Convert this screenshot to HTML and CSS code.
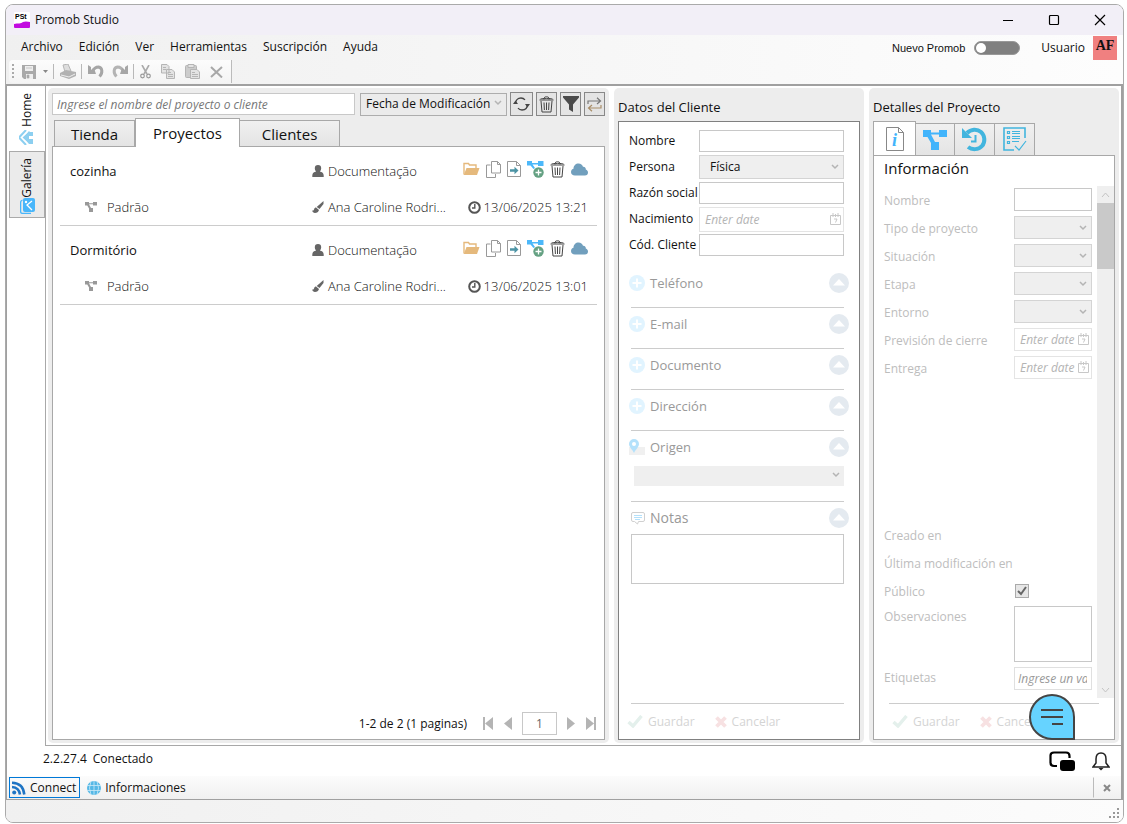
FILE: index.html
```html
<!DOCTYPE html>
<html lang="es">
<head>
	<meta charset="UTF-8">
	<title>Promob Studio</title>
	<link rel="stylesheet" href="styles.css">
</head>
<body>
<!-- icons -->
<svg class="defs" aria-hidden="true">
	<symbol id="i-user" viewBox="0 0 12 13"><path fill="#666" d="M6 0a3.200 3.200 0 0 1 3.200 3.200c0 1.600-.7 2.600-1.400 3.300 2.400.4 3.900 1.500 3.900 4V12H.3v-1.500c0-2.500 1.500-3.600 3.900-4-.7-.7-1.400-1.700-1.400-3.300A3.200 3.200 0 0 1 6 0z"/></symbol>
	<symbol id="i-brush" viewBox="0 0 12 12"><path fill="#666" d="M11.500 0v3L7.500 8 4.700 6z"/><path fill="#666" d="M4 6.500 7 9c-.5 2-2 3-4 3C1.500 12 .5 11 0 9.500c1.500.5 2-.5 2.200-1.500.3-1 .9-1.500 1.800-1.500z"/></symbol>
	<symbol id="i-clock" viewBox="0 0 13 13"><circle cx="6.500" cy="6.500" r="5.300" fill="none" stroke="#555" stroke-width="2"/><path d="M6.800 3v4H4" fill="none" stroke="#555" stroke-width="1.400"/></symbol>
	<symbol id="i-folder" viewBox="0 0 17 14"><path d="M1 12.500V1.500h4.500l1 1.500H13v3" fill="none" stroke="#e5b97c" stroke-width="1.400"/><path d="M3.500 6H16.500L14 13H.8z" fill="#e5b97c"/></symbol>
	<symbol id="i-pages" viewBox="0 0 15 17"><path d="M5.500.5h6l3 3v8.500h-9zM11.500.5v3h3M4.500 4H.5v12.500h9V13" fill="none" stroke="#999"/></symbol>
	<symbol id="i-export" viewBox="0 0 14 16"><path d="M.5.5h9l4 4v11H.5zM9.500.5v4h4" fill="none" stroke="#999"/><path d="M3 8.200h4.500V5.800L11.500 9.500l-4 3.700v-2.400H3z" fill="#4d94a5"/></symbol>
	<symbol id="i-nodeadd" viewBox="0 0 17 17"><path d="M0 0h5v2h6V0h5.500v5H11V3.500H5.500L8 7 6.500 8 3.500 4.500H0z" fill="#4cb8fa"/><circle cx="11.500" cy="11.500" r="5.200" fill="#65a183"/><path d="M8.500 11.500h6M11.500 8.500v6" stroke="#fff" stroke-width="1.300"/></symbol>
	<symbol id="i-trash" viewBox="0 0 15 17"><path d="M.5 4h14M5 3.500C5 1 6 .8 7.500.8S10 1 10 3.500M1.500 3C3 2.200 12 2.200 13.500 3M2 5l1 11h9l1-11M5 6.500l.4 7.500M7.500 6.500V14M10 6.500 9.600 14" fill="none" stroke="#444"/></symbol>
	<symbol id="i-cloud" viewBox="0 0 17 13"><path d="M4 12.500C1.500 12.500 0 11 0 9s1.300-3 2.500-3.300C2.500 2.500 4.800.5 7.500.5c2.300 0 4 1.300 4.500 3.200 2-.2 3 1.300 2.800 2.800C16.200 7 17 8 17 9.500c0 1.800-1.200 3-3 3z" fill="#719fbd"/></symbol>
	<symbol id="i-node" viewBox="0 0 24 20"><path d="M0 0h8v2.500h8V0h8v7h-8V4.500H8L12 12h4v8H8v-7L4.500 7H0z" fill="currentColor"/></symbol>
	<symbol id="i-up" viewBox="0 0 20 20"><circle cx="10" cy="10" r="10" fill="#e4eaf0"/><path d="M4 12.500 10 6l6 6.500z" fill="#fff"/></symbol>
	<symbol id="i-plus" viewBox="0 0 16 16"><circle cx="8" cy="8" r="8" fill="#e1f4ff"/><path d="M3.500 8h9M8 3.500v9" stroke="#fff" stroke-width="2"/></symbol>
	<symbol id="i-cal" viewBox="0 0 11 12"><path d="M.5 2.500h10v9H.5zM3 0v4M5.500 1v3M8 0v4M4 6h3L5.500 9.500" fill="none" stroke="#c8c8c8"/></symbol>
	<symbol id="i-ok" viewBox="0 0 16 13"><path d="M1.500 7 6 11l8.500-10" fill="none" stroke="#e4f0ec" stroke-width="3.400"/></symbol>
	<symbol id="i-no" viewBox="0 0 12 12"><path d="m1.500 1.500 9 9m0-9-9 9" stroke="#f7e1e2" stroke-width="3.800"/></symbol>
</svg>

<div class="window">
	<header class="titlebar">
		<svg class="logo" width="16" height="16"><rect width="16" height="16" rx="1" fill="#fff"/><text x="1" y="7">PSt</text><path d="M0 12c4-1 7 0 9-2 2-1 5-.5 7 0v5q0 1-1 1H1q-1 0-1-1z" fill="#c20be0"/></svg>
		<h1>Promob Studio</h1>
		<div class="winbtns">
			<button type="button" aria-label="Minimizar"><svg width="12" height="12"><path d="M1 6.500h10" stroke="#000"/></svg></button>
			<button type="button" aria-label="Maximizar"><svg width="12" height="12"><rect x="1.500" y="1.500" width="9" height="9" rx="1" fill="none" stroke="#000" stroke-width="1.200"/></svg></button>
			<button type="button" aria-label="Cerrar"><svg width="12" height="12"><path d="m1 1 10 10m0-10L1 11" stroke="#000" stroke-width="1.200"/></svg></button>
		</div>
	</header>

	<div class="top">
		<div class="top-left">
			<nav class="menu">
				<a href="#">Archivo</a>
				<a href="#">Edición</a>
				<a href="#">Ver</a>
				<a href="#">Herramientas</a>
				<a href="#">Suscripción</a>
				<a href="#">Ayuda</a>
			</nav>
			<div class="toolbar">
				<span class="grip"></span>
				<button type="button" aria-label="Guardar"><svg width="14" height="14"><path d="M0 0h14v14H2l-2-2z" fill="#a9a9a9"/><path d="M3 1h8v5H3zM4 9h7v5H4z" fill="#eee"/><path d="M5 10h2v3H5zM4 3h6" fill="#a9a9a9" stroke="#a9a9a9" stroke-width=".6"/></svg></button>
				<button type="button" class="caret" aria-label="Más"><svg width="5" height="3"><path d="M0 0h5L2.500 3z" fill="#888"/></svg></button>
				<i></i>
				<button type="button" aria-label="Imprimir"><svg width="16" height="15"><path d="M3 1 8 0l3 7-6 1z" fill="#ddd" stroke="#b5b5b5"/><path d="m0 9 6-3 10 2v4l-7 3-9-3z" fill="#b2b2b2"/><path d="m1 11 8 2 6-3" fill="none" stroke="#eee"/></svg></button>
				<i></i>
				<button type="button" aria-label="Deshacer"><svg width="16" height="13"><path d="M4 7C6 3 8 2 10.500 2c4 .5 4.500 6 1 9.500" fill="none" stroke="#a6a6a6" stroke-width="3"/><path d="M0 0 3 2v3l3-2 2 6H0z" fill="#a6a6a6"/></svg></button>
				<button type="button" aria-label="Rehacer"><svg width="16" height="13"><path d="M12 7C10 3 8 2 5.500 2 1.500 2.500 1 8 4.500 11.500" fill="none" stroke="#b4b4b4" stroke-width="3"/><path d="m16 0-3 2v3l-3-2-2 6h8z" fill="#a6a6a6"/></svg></button>
				<i></i>
				<button type="button" aria-label="Cortar"><svg width="11" height="14"><path d="M2 0l5 9M9 0 4 9" stroke="#aaa" stroke-width="1.600"/><circle cx="2.500" cy="11" r="1.800" fill="none" stroke="#999" stroke-width="1.200"/><circle cx="8.500" cy="11" r="1.800" fill="none" stroke="#999" stroke-width="1.200"/></svg></button>
				<button type="button" aria-label="Copiar"><svg width="14" height="15"><path d="M.5.500H6l2 2V9H.5zM5.500 5.500H11l2.500 2.500v6.500h-8z" fill="#e3e3e3" stroke="#b5b5b5"/><path d="M7 8.500h3M7 10.500h5M7 12.500h5M2 3.500h3M2 5.500h3" stroke="#b5b5b5"/></svg></button>
				<button type="button" aria-label="Pegar"><svg width="15" height="15"><rect x=".5" y="1.500" width="11" height="12" rx="1" fill="#ccc" stroke="#b5b5b5"/><path d="M3 .500h6v3H3zM5.500 5.500H12l2.500 2.500v6.500h-9z" fill="#e3e3e3" stroke="#b5b5b5"/><path d="M7 8.500h3M7 10.500h6M7 12.500h6" stroke="#b5b5b5"/></svg></button>
				<button type="button" aria-label="Eliminar"><svg width="13" height="12"><path d="m1 1 11 10.500M12 1 1 11" stroke="#a8a8a8" stroke-width="2"/></svg></button>
			</div>
		</div>
		<div class="account">
			<label for="nuevo">Nuevo Promob</label>
			<input type="checkbox" id="nuevo" class="switch" role="switch">
			<span class="user">Usuario</span>
			<b class="avatar">AF</b>
		</div>
	</div>

	<main class="main">
		<nav class="side">
			<a href="#" class="home"><span>Home</span><svg width="15" height="15"><path d="M7 0 0 7.500 7 15M11 2 5 7.500 11 13" fill="none" stroke="#8ccff0" stroke-width="2"/><path d="M5 7.500 10 1v1h4v4h-4v3h4v5h-4z" fill="#8ccff0"/></svg></a>
			<a href="#" class="gal"><span>Galería</span><svg width="15" height="16"><path d="M2.500 2C1 2.500.6 3 .6 4.500v9c0 1.300.6 1.900 1.900 1.900H11" fill="none" stroke="#49b6fa" stroke-width="1.300"/><rect x="3" width="12" height="14" rx="2" fill="#49b6fa"/><path d="m12 3-5 4 5 5" fill="none" stroke="#fff" stroke-width="1.300"/><circle cx="6" cy="4" r="1.200" fill="#fff"/></svg></a>
		</nav>

		<div class="panels">
			<!-- projects -->
			<section class="panel projects">
				<div class="search">
					<input type="text" placeholder="Ingrese el nombre del proyecto o cliente" aria-label="Buscar">
					<select aria-label="Orden"><option>Fecha de Modificación</option></select>
					<button type="button" aria-label="Actualizar"><svg width="17" height="16"><path d="M2.500 8C2.500 4 5 2 8 2c2 0 3 .6 4 1.800M14.500 8c0 4-2.500 6-5.500 6-2 0-3-.6-4-1.800" fill="none" stroke="#444" stroke-width="1.300"/><path d="M0 8h5L2.500 4.500zM17 8h-5l2.500 3.500z" fill="#444"/></svg></button>
					<button type="button" aria-label="Papelera"><svg width="15" height="17"><use href="#i-trash"/></svg></button>
					<button type="button" aria-label="Filtro"><svg width="16" height="16"><path d="M0 0h16v1.500L10 8.500V16l-4-2.500v-5L0 1.500z" fill="#4a4a4a"/></svg></button>
					<button type="button" aria-label="Intercambiar"><svg width="15" height="15"><path d="M1 7V4h12M10 .800 13.500 4 10 7" fill="none" stroke="#777" stroke-width="1.200"/><path d="M14 8v3H2M5 8l-3.500 3L5 14.200" fill="none" stroke="#a88d68" stroke-width="1.200"/></svg></button>
				</div>
				<div class="tabs">
					<button type="button">Tienda</button>
					<button type="button" class="actived">Proyectos</button>
					<button type="button">Clientes</button>
				</div>
				<div class="box">
					<article class="item">
						<div class="name">cozinha</div>
						<div class="cell"><svg width="12" height="13"><use href="#i-user"/></svg>Documentação</div>
						<div class="acts">
							<svg width="17" height="14"><use href="#i-folder"/></svg>
							<svg width="15" height="17"><use href="#i-pages"/></svg>
							<svg width="14" height="16"><use href="#i-export"/></svg>
							<svg width="17" height="17"><use href="#i-nodeadd"/></svg>
							<svg width="15" height="17"><use href="#i-trash"/></svg>
							<svg width="17" height="13"><use href="#i-cloud"/></svg>
						</div>
						<div class="cell env"><svg width="12" height="10"><use href="#i-node"/></svg>Padrão</div>
						<div class="cell"><svg width="12" height="12"><use href="#i-brush"/></svg>Ana Caroline Rodri...</div>
						<div class="cell date"><svg width="13" height="13"><use href="#i-clock"/></svg>13/06/2025 13:21</div>
					</article>
					<article class="item">
						<div class="name">Dormitório</div>
						<div class="cell"><svg width="12" height="13"><use href="#i-user"/></svg>Documentação</div>
						<div class="acts">
							<svg width="17" height="14"><use href="#i-folder"/></svg>
							<svg width="15" height="17"><use href="#i-pages"/></svg>
							<svg width="14" height="16"><use href="#i-export"/></svg>
							<svg width="17" height="17"><use href="#i-nodeadd"/></svg>
							<svg width="15" height="17"><use href="#i-trash"/></svg>
							<svg width="17" height="13"><use href="#i-cloud"/></svg>
						</div>
						<div class="cell env"><svg width="12" height="10"><use href="#i-node"/></svg>Padrão</div>
						<div class="cell"><svg width="12" height="12"><use href="#i-brush"/></svg>Ana Caroline Rodri...</div>
						<div class="cell date"><svg width="13" height="13"><use href="#i-clock"/></svg>13/06/2025 13:01</div>
					</article>
					<div class="pager">
						<span>1-2 de 2 (1 paginas)</span>
						<button type="button" aria-label="Primera"><svg width="10" height="13"><path d="M0 0h2v13H0zM10 0v13L2 6.500z" fill="#b4b4b4"/></svg></button>
						<button type="button" aria-label="Anterior"><svg width="8" height="13"><path d="M8 0v13L0 6.500z" fill="#b4b4b4"/></svg></button>
						<input type="text" value="1" aria-label="Página">
						<button type="button" aria-label="Siguiente"><svg width="8" height="13"><path d="M0 0v13l8-6.500z" fill="#b4b4b4"/></svg></button>
						<button type="button" aria-label="Última"><svg width="10" height="13"><path d="M8 0h2v13H8zM0 0v13l8-6.500z" fill="#b4b4b4"/></svg></button>
					</div>
				</div>
			</section>

			<!-- client data -->
			<section class="panel client">
				<h2>Datos del Cliente</h2>
				<div class="box">
					<div class="row"><label for="c1">Nombre</label><input type="text" id="c1"></div>
					<div class="row"><label for="c2">Persona</label><select id="c2"><option>Física</option></select></div>
					<div class="row"><label for="c3">Razón social</label><input type="text" id="c3"></div>
					<div class="row"><label for="c4">Nacimiento</label><span class="date-in"><input type="text" id="c4" placeholder="Enter date"><svg width="11" height="12"><use href="#i-cal"/></svg></span></div>
					<div class="row"><label for="c5">Cód. Cliente</label><input type="text" id="c5"></div>
					<div class="groups">
						<div class="group"><h3><svg width="16" height="16"><use href="#i-plus"/></svg>Teléfono<button type="button" aria-label="Plegar"><svg width="20" height="20"><use href="#i-up"/></svg></button></h3></div>
						<div class="group"><h3><svg width="16" height="16"><use href="#i-plus"/></svg>E-mail<button type="button" aria-label="Plegar"><svg width="20" height="20"><use href="#i-up"/></svg></button></h3></div>
						<div class="group"><h3><svg width="16" height="16"><use href="#i-plus"/></svg>Documento<button type="button" aria-label="Plegar"><svg width="20" height="20"><use href="#i-up"/></svg></button></h3></div>
						<div class="group"><h3><svg width="16" height="16"><use href="#i-plus"/></svg>Dirección<button type="button" aria-label="Plegar"><svg width="20" height="20"><use href="#i-up"/></svg></button></h3></div>
						<div class="group origin">
							<h3><svg width="16" height="16"><path d="M0 8h16v8H0z" fill="#f0f0f0"/><path d="M5 0a5 5 0 0 1 5 5c0 3-3 5-5 9C3 10 0 8 0 5a5 5 0 0 1 5-5z" fill="#b4e1fb"/><circle cx="5" cy="5" r="2" fill="#fff"/></svg>Origen<button type="button" aria-label="Plegar"><svg width="20" height="20"><use href="#i-up"/></svg></button></h3>
							<select aria-label="Origen"></select>
						</div>
						<div class="group notes">
							<h3><svg width="16" height="16"><path d="M4 2.500h10q1.500 0 1.500 1.500v6q0 1.500-1.500 1.500H9.500l-1 2.500-3-2.500H4Q2.500 11.500 2.500 10V4q0-1.500 1.500-1.500z" fill="#fff" stroke="#d0d0d0"/><path d="M5 5.500h8M5 7.500h8M6 9.500h5" stroke="#b4e1fb"/></svg><label for="notas">Notas</label><button type="button" aria-label="Plegar"><svg width="20" height="20"><use href="#i-up"/></svg></button></h3>
							<textarea id="notas"></textarea>
						</div>
					</div>
					<div class="foot">
						<button type="button"><svg width="16" height="13"><use href="#i-ok"/></svg>Guardar</button>
						<button type="button"><svg width="12" height="12"><use href="#i-no"/></svg>Cancelar</button>
					</div>
				</div>
			</section>

			<!-- project details -->
			<section class="panel details">
				<h2>Detalles del Proyecto</h2>
				<div class="tabs">
					<button type="button" class="actived" aria-label="Información"><svg width="18" height="24"><path d="M.5.500h12l5 5v18H.5zM12.500.500v5h5" fill="#fff" stroke="#888"/><text class="info" x="6" y="19">i</text></svg></button>
					<button type="button" class="nodes" aria-label="Entornos"><svg width="24" height="20"><use href="#i-node"/></svg></button>
					<button type="button" aria-label="Historial"><svg width="25" height="26"><path d="M5 6C9 2 15 1.500 19 5s4.500 10 1 14-10 4-14 1" fill="none" stroke="#42b5de" stroke-width="4"/><path d="M0 1v10h10z" fill="#42b5de"/><path d="M13.500 8v6.500H9" fill="none" stroke="#42b5de" stroke-width="2"/></svg></button>
					<button type="button" aria-label="Tareas"><svg width="24" height="25"><path d="M22 11V1H1v22h10" fill="none" stroke="#42b5de" stroke-width="1.600"/><path d="M4.500 4.500h2v2h-2zM4.500 9.500h2v2h-2zM4.500 14.500h2v2h-2zM9 4.500h8M9 6.500h8M9 9.500h8M9 11.500h8M9 14.500h7M12 19l4 4 7-9" fill="none" stroke="#42b5de" stroke-width="1.200"/></svg></button>
				</div>
				<div class="box">
					<h3>Información</h3>
					<div class="scroller">
						<div class="form">
							<label for="d1">Nombre</label><input type="text" id="d1">
							<label for="d2">Tipo de proyecto</label><select id="d2"></select>
							<label for="d3">Situación</label><select id="d3"></select>
							<label for="d4">Etapa</label><select id="d4"></select>
							<label for="d5">Entorno</label><select id="d5"></select>
							<label for="d6">Previsión de cierre</label><span class="date-in"><input type="text" id="d6" placeholder="Enter date"><svg width="11" height="12"><use href="#i-cal"/></svg></span>
							<label for="d7">Entrega</label><span class="date-in"><input type="text" id="d7" placeholder="Enter date"><svg width="11" height="12"><use href="#i-cal"/></svg></span>
							<span class="gap"></span>
							<span class="wide">Creado en</span>
							<span class="wide">Última modificación en</span>
							<label for="d8">Público</label><input type="checkbox" id="d8" class="check" checked>
							<label for="d9" class="obs">Observaciones</label><textarea id="d9"></textarea>
							<label for="d10" class="tag">Etiquetas</label><input type="text" id="d10" class="pale" placeholder="Ingrese un valor">
						</div>
						<div class="bar">
							<svg width="9" height="17"><path d="m1 11 3.500-4L8 11" fill="none" stroke="#c4c4c4"/></svg>
							<span class="thumb"></span>
							<svg width="9" height="17"><path d="m1 7 3.500 4L8 7" fill="none" stroke="#c4c4c4"/></svg>
						</div>
					</div>
					<div class="foot">
						<button type="button"><svg width="16" height="13"><use href="#i-ok"/></svg>Guardar</button>
						<button type="button"><svg width="12" height="12"><use href="#i-no"/></svg>Cancelar</button>
					</div>
					<button type="button" class="chat" aria-label="Chat"><svg width="46" height="46"><path d="M23 1a22 22 0 1 0 0 44h22V23A22 22 0 0 0 23 1z" fill="#66d3ff" stroke="#444" stroke-width="2"/><path d="M12 16h22M12 23h22M23 30h11" stroke="#444" stroke-width="2"/></svg></button>
				</div>
			</section>
		</div>
	</main>

	<div class="status">
		<span>2.2.27.4</span><span>Conectado</span>
		<svg class="cards" width="26" height="20"><path d="M8 15H5q-3.500 0-3.500-3.500v-7Q1.500 1.500 5 1.500h12q3.500 0 3.500 3.500v2" fill="none" stroke="#000" stroke-width="2.200"/><rect x="11" y="9" width="15" height="11" rx="3"/></svg>
		<svg width="18" height="19"><path d="M9 1C5.500 1 4 3.500 4 7v4l-3 4h16l-3-4V7c0-3.500-1.500-6-5-6z" fill="none" stroke="#222" stroke-width="1.500"/><path d="M6.500 16h5L9 18.500z" fill="#222"/></svg>
	</div>
	<div class="dock">
		<button type="button" class="actived"><svg width="14" height="14"><circle cx="2.200" cy="11.500" r="2" fill="#1e74c4"/><path d="M0 6q7 .5 8 7.500M0 1.800Q11 2 12.300 13.500" fill="none" stroke="#1e74c4" stroke-width="2.600"/></svg>Connect</button>
		<button type="button"><svg width="14" height="14"><circle cx="7" cy="7" r="7" fill="#55b8e6"/><path d="M0 4.500h14M0 9.500h14M7 0v14M4 0q-3 7 0 14M10 0q3 7 0 14" fill="none" stroke="#cdeaf8" stroke-width=".8"/></svg>Informaciones</button>
		<button type="button" class="close" aria-label="Cerrar panel"><svg width="8" height="8"><path d="m1 1 6 6m0-6L1 7" stroke="#888" stroke-width="2"/></svg></button>
	</div>
	<footer class="bottom"><svg width="11" height="11"><path d="M8 0h2v2H8zM4 4h2v2H4zM8 4h2v2H8zM0 8h2v2H0zM4 8h2v2H4zM8 8h2v2H8z" fill="#999"/></svg></footer>
</div>
</body>
</html>
```
FILE: styles.css
```css
*{box-sizing:border-box;}
body{margin:0;padding:4px 3px 1px 5px;height:100vh;background:#fff;font:12px/16px "Open Sans","Noto Sans",sans-serif;color:#111;}
h1,h2,h3{margin:0;font-weight:normal;}
a{color:inherit;text-decoration:none;}
button,input,select,textarea{font:inherit;color:inherit;border-radius:0;margin:0;min-width:0;}
button{background:none;border:0;padding:0;display:flex;align-items:center;justify-content:center;}
svg{flex:none;display:block;}
.defs{display:none;}
input,textarea{border:1px solid #c8c8c8;background:#fff;padding:0 4px;resize:none;}
input::placeholder{color:#999;font-style:italic;opacity:1;}
select{appearance:none;border:1px solid #d4d4d4;padding:0 16px 0 10px;background:#efefef url("data:image/svg+xml,%3Csvg xmlns='http://www.w3.org/2000/svg' width='8' height='6'%3E%3Cpath d='m1 1 3 3 3-3' fill='none' stroke='%23b4b4b4' stroke-width='1.500'/%3E%3C/svg%3E") no-repeat right 4px top 8px;}

.window{height:100%;display:flex;flex-direction:column;border:1px solid #aaa;border-radius:8px;overflow:hidden;}

/* title, menu, toolbar */
.titlebar{height:30px;flex:none;display:flex;align-items:center;gap:5px;padding-left:8px;background:#f2eff7;}
.titlebar h1{font-size:12px;}
.logo text{font:bold 7px "Liberation Sans",sans-serif;}
.winbtns{margin-left:auto;display:flex;}
.winbtns button{width:46px;height:30px;}
.top{height:49px;flex:none;display:flex;justify-content:space-between;background:linear-gradient(90deg,#f0f0f0,#fdfdfd);}
.menu{display:flex;gap:16px;padding:4px 15px;height:25px;}
.toolbar{height:23px;margin-left:3px;width:223px;display:flex;align-items:center;gap:8px;padding-left:3px;background:linear-gradient(#fcfcfc,#f4f4f4);border-right:1px solid #bbb;border-radius:4px 0 0 4px;}
.toolbar i{width:1px;height:15px;background:#b8b8b8;margin:0 -2px 0 -3px;}
.toolbar .caret{margin:0 0 0 -1px;}
.toolbar button:nth-last-of-type(-n+3){margin-left:2px;}
.grip{width:2px;height:15px;background:repeating-linear-gradient(#aaa 0 2px,transparent 2px 4px);}
.account{display:flex;align-items:center;height:25px;padding-right:6px;}
.account label{font-family:"Liberation Sans",sans-serif;font-size:11px;}
.switch{appearance:none;width:46px;height:14px;margin:0 21px 0 9px;padding:1px;border:1px solid #999;border-radius:7px;background:#808080;}
.switch:before{content:'';display:block;width:10px;height:10px;border-radius:50%;background:#fff;}
.avatar{width:24px;height:24px;margin-left:8px;background:#f08080;font:bold 14px/20px "Liberation Serif",serif;text-align:center;}

/* main area */
.main{flex:1;min-height:0;display:flex;border:2px solid #a0a0a0;border-width:2px 2px 0 1px;}
.side{width:38px;flex:none;}
.side a{display:flex;flex-direction:column;align-items:center;}
.side span{writing-mode:vertical-rl;transform:rotate(180deg);}
.home{height:65px;padding:7px 0 0 1px;gap:3px;}
.gal{height:67px;margin:0 0 0 2px;padding-top:6px;border:1px solid #aaa;background:#ebebeb;}
.panels{flex:1;min-width:0;display:grid;grid-template-columns:minmax(0,1fr) 250px 250px;gap:5px;padding:2px;border:1px solid #a8a8a8;border-width:0 0 1px 1px;}
.panel{background:#ededed;border-radius:5px;padding:4px 4px 3px;display:flex;flex-direction:column;min-height:0;}
.panel h2{height:29px;font-size:13px;line-height:30px;}
.box{flex:1;min-height:0;background:#fff;border:1px solid #a8a8a8;display:flex;flex-direction:column;}

/* projects */
.search{display:flex;align-items:center;gap:3px;height:24px;}
.search input{flex:1;height:22px;margin-right:2px;}
.search input::placeholder{color:#777;}
.search select{width:147px;height:23px;padding-left:5px;border-color:#adadad;background-color:#ebebeb;background-position:right 4px top 6px;}
.search button{width:21px;height:24px;border:1px solid #888;background:#e4e4e4;}
.search button:nth-of-type(1){width:23px;}
.tabs{display:flex;align-items:flex-end;}
.tabs button{border:1px solid #a8a8a8;border-bottom:0;background:linear-gradient(#f0f0f0,#e4e4e4);}
.tabs .actived{background:#fff;margin-bottom:-1px;position:relative;}
.projects .tabs{padding-left:2px;height:30px;font-size:15px;}
.projects .tabs button{width:81px;height:26px;}
.projects .tabs .actived{width:105px;height:29px;}
.projects .tabs button:last-child{width:100px;border-left:0;}
.item{margin:0 7px;padding:12px 9px 6px 10px;height:79px;flex:none;display:grid;grid-template-columns:1fr 151px 125px;grid-auto-rows:24px;row-gap:12px;align-items:center;border-bottom:1px solid #ccc;font-size:13px;}
.cell{display:flex;align-items:center;gap:4px;font-weight:300;white-space:nowrap;}
.env{padding-left:15px;gap:10px;}
.env svg{color:#999;}
.date{justify-content:flex-end;gap:3px;}
.acts{display:flex;align-items:center;justify-content:space-between;padding-bottom:4px;}
.pager{margin-top:auto;padding:0 8px 4px 0;display:flex;align-items:center;justify-content:flex-end;gap:9px;height:27px;}
.pager span{margin-right:6px;}
.pager input{width:35px;height:23px;text-align:center;color:#666;}
.pager button{margin:0 1px;}
.pager button:last-child{margin-right:0;}

/* client */
.client .box{border-color:#808080;padding-top:6px;}
.row{display:grid;grid-template-columns:70px 1fr;align-items:center;height:26px;margin:0 15px 0 10px;white-space:nowrap;}
.row input{height:22px;}
.row select{height:24px;}
.date-in{display:grid;grid-template-columns:1fr 13px;align-items:center;border:1px solid #e4e4e4;height:25px;}
.date-in input{border:0;width:100%;padding:0 0 0 5px;height:21px;}
.date-in input::placeholder{color:#b4b4b4;}
.row .date-in input{height:23px;}
.groups{margin-top:9px;}
.group{height:41px;}
.group:after{content:'';display:block;border-bottom:1px solid #ccc;margin:8px 15px 0 12px;}
.group h3{height:32px;padding:0 10px;display:flex;align-items:center;gap:5px;font-size:13px;color:#999;}
.group button{margin-left:auto;}
.origin{height:71px;}
.origin select{display:block;width:calc(100% - 30px);height:20px;margin:3px 15px 0 15px;border:0;background-position:right 4px top 6px;}
.origin:after{margin-top:15px;}
.notes{height:auto;}
.notes:after{display:none;}
.notes h3{font-size:14px;}
.notes textarea{display:block;width:calc(100% - 27px);height:50px;margin-left:12px;}
.foot{margin:auto 15px 0 12px;height:36px;border-top:1px solid #ccc;display:flex;align-items:center;gap:20px;color:#d4d4d4;flex:none;}
.foot button{gap:5px;}
.client .foot button:first-child{margin-left:-4px;}

/* details */
.details .tabs{height:34px;}
.details .tabs button{width:40px;height:32px;border-left-width:0;}
.details .tabs .actived{width:43px;height:35px;border-left-width:1px;}
.details .tabs .nodes{width:39px;color:#42b4fb;}
.info{font:italic bold 18px "Liberation Serif",serif;fill:#42b4fb;}
.details .box{position:relative;}
.details h3{font-size:15px;line-height:24px;padding-left:10px;height:30px;}
.scroller{flex:1;min-height:0;display:flex;}
.form{flex:1;min-width:0;display:grid;grid-template-columns:130px 1fr;grid-template-rows:repeat(7,28px) 1fr repeat(3,28px) 60px 28px;align-items:center;padding:1px 5px 4px 10px;color:#bdbdbd;white-space:nowrap;}
.form>input,.form>select,.form .date-in{height:23px;width:100%;margin-bottom:4px;}
.form>input,.form>select{padding-left:3px;}
.form .gap,.form .wide{grid-column:1 / 3;}
.form .check{appearance:none;width:14px;height:14px;margin:0 0 2px 1px;padding:0;border-color:#aaa;background:#e6e6e6 url("data:image/svg+xml,%3Csvg xmlns='http://www.w3.org/2000/svg' width='12' height='12'%3E%3Cpath d='m2 6 3 3 5-7' fill='none' stroke='%23666' stroke-width='2'/%3E%3C/svg%3E") no-repeat;}
.form textarea{height:56px;width:100%;align-self:start;}
.form .obs{align-self:start;padding-top:3px;}
.form .tag{margin-bottom:4px;}
.form .pale{border-color:#e0e0e0;}
.bar{width:17px;flex:none;background:#efefef;display:flex;flex-direction:column;align-items:center;}
.thumb{width:17px;height:66px;background:#c9c9c9;margin-bottom:auto;}
.details .foot{margin:5px 15px 0 15px;padding-left:3px;}
.chat{position:absolute;right:39px;bottom:-1px;}

/* bottom */
.status{height:30px;flex:none;display:flex;align-items:center;gap:6px;padding:0 11px 4px 36px;border:2px solid #a0a0a0;border-width:0 2px 0 1px;}
.status .cards{margin:4px 11px 0 auto;}
.status svg{margin-top:4px;}
.dock{height:24px;flex:none;display:flex;align-items:center;gap:4px;padding-left:2px;background:linear-gradient(#fcfcfc,#f0f0f0);border:1px solid #a0a0a0;border-width:0 2px 1px 1px;}
.dock button{height:21px;padding:0 3px 0 2px;gap:4px;border:1px solid transparent;}
.dock .actived{border-color:#0078d7;}
.dock .close{margin-left:auto;width:28px;padding:0;border-left-color:#bbb;}
.bottom{height:22px;flex:none;display:flex;align-items:flex-end;justify-content:flex-end;padding:0 3px 3px 0;background:linear-gradient(90deg,#f0f0f0,#fcfcfc);}
```
